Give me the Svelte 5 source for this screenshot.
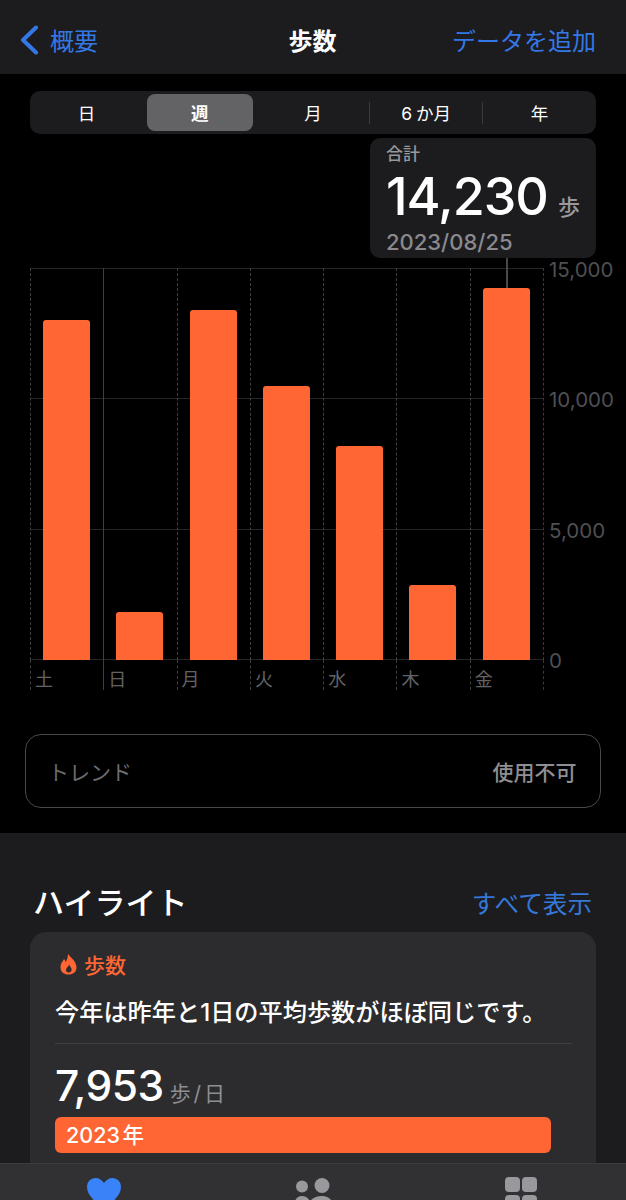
<script>
  const segments = [
    { label: '日' },
    { label: '週', active: true },
    { label: '月', sep: true },
    { label: '6 か月', sep: true },
    { label: '年' }
  ];
  const days = [
    { d: '土', top: 320 },
    { d: '日', top: 612, solid: true },
    { d: '月', top: 310 },
    { d: '火', top: 386 },
    { d: '水', top: 446 },
    { d: '木', top: 585 },
    { d: '金', top: 288, pin: true }
  ];
  const ticks = ['15,000', '10,000', '5,000', '0'];
</script>

<div class="screen">
  <header class="nav">
    <div class="back">
      <svg class="chev" width="20" height="30" viewBox="0 0 20 30"><path d="M17 2.500 L4 15 L17 27.500" fill="none" stroke="#3478e5" stroke-width="4" stroke-linecap="round" stroke-linejoin="round"/></svg>
      <span>概要</span>
    </div>
    <div class="title">歩数</div>
    <div class="add">データを追加</div>
  </header>

  <section class="main">
    <div class="seg">
      {#each segments as s}
        <div class="seg-item" class:active={s.active} class:sep={s.sep}><span>{s.label}</span></div>
      {/each}
    </div>

    <div class="tip">
      <div class="tip-label">合計</div>
      <div class="tip-value"><span class="num">14,230</span><span class="unit">歩</span></div>
      <div class="tip-date">2023/08/25</div>
    </div>

    <div class="chart">
      <div class="plot-wrap">
        <div class="plot">
          <div class="hlines">
            {#each ticks as _}<i></i>{/each}
          </div>
          {#each days as c}
            <div class="col" class:solid={c.solid}>
              <div class="bar" class:pin={c.pin} style="height:{660 - c.top}px"></div>
            </div>
          {/each}
        </div>
        <div class="labels">
          {#each days as c}
            <div class="lab" class:solid={c.solid}>{c.d}</div>
          {/each}
        </div>
      </div>
      <div class="axis">
        {#each ticks as t}<div class="tick"><span>{t}</span></div>{/each}
      </div>
    </div>

    <div class="trend">
      <span class="t-l">トレンド</span>
      <span class="t-r">使用不可</span>
    </div>
  </section>

  <section class="lower">
    <div class="hl-head">
      <h2>ハイライト</h2>
      <span class="all">すべて表示</span>
    </div>
    <div class="card">
      <div class="card-head">
        <svg width="17" height="22" viewBox="0 0 17 22"><path fill-rule="evenodd" d="M8 0.500C9 4 16.500 7 16.500 14.500C16.500 19 13 21.500 8.500 21.500C4 21.500 0.500 19 0.500 14.500C0.500 10 3 8 4 6C5 7 5.500 8 5.500 9.500C7 7 8 4 8 0.500ZM9 11.500C9 13 6 14.500 6 17C6 18.700 7.300 19.500 8.700 19.500C10.200 19.500 11.600 18.500 11.600 16.700C11.600 14.500 9.800 13.500 9 11.500Z" fill="#ff6633"/></svg>
        <span>歩数</span>
      </div>
      <p class="sentence">今年は昨年と1日の平均歩数がほぼ同じです。</p>
      <hr />
      <div class="avg"><span class="avg-num">7,953</span><span class="avg-unit">歩 / 日</span></div>
      <div class="year-bar">2023 年</div>
    </div>
  </section>

  <nav class="tabs">
    <svg class="i-heart" width="36" height="33" viewBox="0 0 36 33"><path d="M18 32C9 25 1 18 1 10C1 4.500 5 1 9.500 1C13 1 16 3 18 6C20 3 23 1 26.500 1C31 1 35 4.500 35 10C35 18 27 25 18 32Z" fill="#3a82f7"/></svg>
    <svg class="i-people" width="40" height="30" viewBox="0 0 40 30"><circle cx="8" cy="9.500" r="6" fill="#98989d"/><circle cx="28" cy="8.500" r="7.500" fill="#98989d"/><path d="M0 30C0 23 3 19 8 19C13 19 17 23 17 30Z" fill="#98989d"/><path d="M14 32C14 23 20 19 28 19C35 19 40 24 40 32Z" fill="#98989d"/></svg>
    <div class="i-grid"><i></i><i></i><i></i><i></i></div>
  </nav>
</div>

<style>
  :global(body) { margin: 0; background: #000; }
  .screen {
    position: relative;
    width: 626px;
    height: 1200px;
    overflow: hidden;
    background: #000;
    color: #fff;
    font-family: Inter, "Noto Sans CJK JP", sans-serif;
  }
  .nav {
    height: 74px;
    background: #1c1c1e;
    display: flex;
    align-items: center;
    justify-content: space-between;
    padding: 5px 30px 0 19px;
    box-sizing: border-box;
    font-size: 24px;
    color: #3478e5;
    position: relative;
  }
  .back { display: flex; align-items: center; gap: 11px; }
  .title { position: absolute; left: -1px; right: 0; text-align: center; color: #fff; font-weight: 700; pointer-events: none; }

  .main { height: 759px; padding: 17px 30px 0; box-sizing: border-box; }
  .seg {
    display: flex;
    height: 43px;
    background: #1c1c1e;
    border-radius: 10px;
  }
  .seg-item {
    flex: 1 1 0;
    display: flex;
    align-items: center;
    justify-content: center;
    font-size: 17.500px;
    word-spacing: -1px;
    position: relative;
  }
  .seg-item span { position: relative; }
  .seg-item.active { font-weight: 700; }
  .seg-item.active::before {
    content: '';
    position: absolute;
    inset: 3px 3.500px;
    background: #636366;
    border-radius: 8px;
  }
  .seg-item.sep::after {
    content: '';
    position: absolute;
    right: 0;
    top: 11px;
    bottom: 10px;
    width: 1px;
    background: #3a3a3c;
  }

  .tip {
    margin: 4px 0 0 340px;
    height: 120px;
    width: 226px;
    box-sizing: border-box;
    background: #1c1c1e;
    border-radius: 10px;
    padding: 4px 16px 0;
  }
  .tip-label { font-size: 17px; line-height: 24px; color: #98989d; font-weight: 500; }
  .tip-value { display: flex; align-items: baseline; justify-content: space-between; height: 60px; line-height: 60px; margin-top: 1px; }
  .num { font-size: 52px; font-weight: 500; letter-spacing: -1px; }
  .unit { font-size: 22px; color: #98989d; font-weight: 500; }
  .tip-date { font-size: 22px; line-height: 30px; color: #8a8a8e; font-weight: 500; }

  .chart { display: flex; margin-top: 10px; }
  .plot-wrap { width: 514px; }
  .plot {
    position: relative;
    height: 392px;
    display: grid;
    grid-template-columns: repeat(7, 73.300px);
    border-right: 1px dashed #3a3a3c;
    width: 513px;
  }
  .hlines {
    position: absolute;
    inset: 0;
    display: flex;
    flex-direction: column;
    justify-content: space-between;
  }
  .hlines i { display: block; height: 1px; background: #262628; }
  .col {
    position: relative;
    border-left: 1px dashed #3f3f42;
    display: flex;
    align-items: flex-end;
    padding-left: 12px;
  }
  .col.solid, .lab.solid { border-left: 1px solid #3f3f42; }
  .bar {
    position: relative;
    width: 47px;
    background: #ff6633;
    border-radius: 3px 3px 0 0;
  }
  .bar.pin::before {
    content: '';
    position: absolute;
    left: 23px;
    top: -30px;
    width: 2px;
    height: 30px;
    background: #48484a;
  }
  .labels { display: grid; grid-template-columns: repeat(7, 73.300px); width: 513px; height: 30px; border-right: 1px dashed #3a3a3c; }
  .lab {
    border-left: 1px dashed #3f3f42;
    padding-left: 4px;
    font-size: 18px;
    line-height: 40px;
    height: 30px;
    color: #636366;
  }
  .axis {
    height: 392px;
    display: flex;
    flex-direction: column;
    justify-content: space-between;
    margin-left: 5px;
    font-size: 20.500px;
    color: #4f4f53;
  }
  .tick { height: 1px; position: relative; line-height: 3px; white-space: nowrap; }

  .trend {
    margin: 44px -5px 0;
    height: 74px;
    box-sizing: border-box;
    border: 1.500px solid #48484a;
    border-radius: 16px;
    display: flex;
    align-items: center;
    justify-content: space-between;
    padding: 0 23.500px 0 22px;
  }
  .t-l { font-size: 21px; color: #6b6b70; }
  .t-r { font-size: 21px; color: #8e8e93; font-weight: 500; }

  .lower { background: #1c1c1e; height: 367px; padding: 0 30px; box-sizing: border-box; }
  .hl-head {
    display: flex;
    align-items: center;
    justify-content: space-between;
    height: 99px;
    padding: 39px 4px 0 3px;
    box-sizing: border-box;
  }
  h2 { margin: 0; font-size: 31px; font-weight: 500; line-height: 1; }
  .all { font-size: 24.600px; color: #3478d8; }
  .card {
    background: #2c2c2e;
    border-radius: 16px;
    height: 300px;
    padding: 21px 24px 0 25px;
    box-sizing: border-box;
  }
  .card-head {
    display: flex;
    align-items: center;
    gap: 7px;
    height: 22px;
    padding-left: 5px;
    color: #ff6633;
    font-size: 21px;
    font-weight: 500;
  }
  .sentence { margin: 22px 0 0; font-size: 24.200px; line-height: 32px; font-weight: 500; white-space: nowrap; }
  hr { margin: 14px 0 0; border: 0; height: 1px; background: #3f3f42; }
  .avg { display: flex; align-items: baseline; height: 60px; margin-top: 12px; line-height: 60px; }
  .avg-num { font-size: 42.500px; font-weight: 500; letter-spacing: -0.5px; }
  .avg-unit { font-size: 21px; color: #8e8e93; margin-left: 6px; word-spacing: -3px; }
  .year-bar {
    width: 496px;
    height: 36px;
    margin-top: 1px;
    background: #ff6633;
    border-radius: 6px;
    padding-left: 11px;
    box-sizing: border-box;
    font-size: 21.500px;
    word-spacing: -3px;
    line-height: 37px;
    font-weight: 500;
  }

  .tabs {
    position: absolute;
    left: 0;
    right: 0;
    top: 1163px;
    height: 60px;
    background: #313133;
    border-top: 1px solid #3c3c3e;
    box-sizing: border-box;
  }
  .i-heart { position: absolute; left: 86px; top: 13px; }
  .i-people { position: absolute; left: 294px; top: 13px; }
  .i-grid {
    position: absolute;
    left: 505px;
    top: 13px;
    display: grid;
    grid-template-columns: 15px 15px;
    grid-auto-rows: 15px;
    gap: 3px 2px;
  }
  .i-grid i { display: block; background: #98989d; border-radius: 4px; }
</style>
